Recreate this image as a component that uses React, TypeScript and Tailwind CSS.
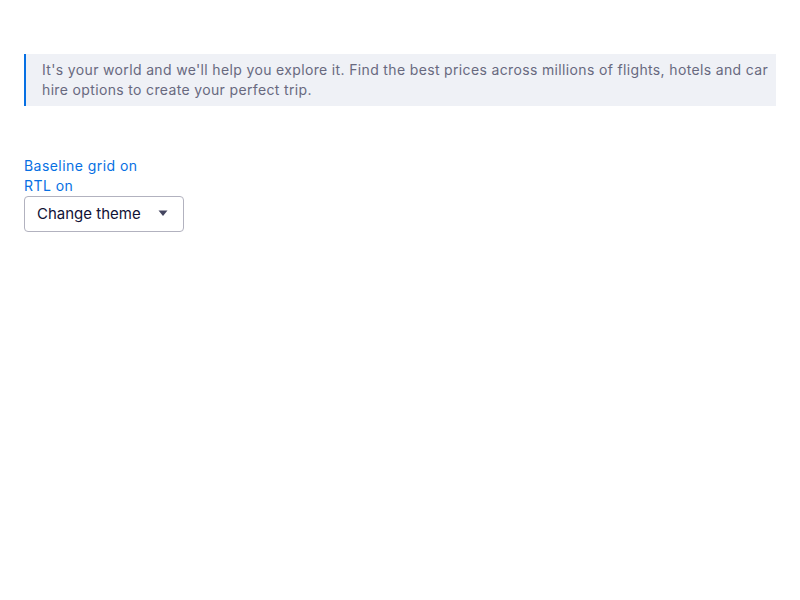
export default function App() {
  return (
    <div className="min-h-[600px] w-full bg-white px-6 pt-[54px] font-['Inter',sans-serif]">
      <blockquote className="border-l-2 border-[#0770e3] bg-[#eff1f6] py-[6px] pl-4 pr-1 text-[14px] leading-5 tracking-[0.35px] text-[#68697f]">
        It's your world and we'll help you explore it. Find the best prices across millions of flights, hotels and car
        hire options to create your perfect trip.
      </blockquote>
      <div className="mt-[50px] flex flex-col items-start text-[14px] leading-5 tracking-[0.45px] text-[#0770e3]">
        <button className="leading-5">Baseline grid on</button>
        <button className="leading-5">RTL on</button>
      </div>
      <div className="relative w-[160px]">
        <select className="h-9 w-full appearance-none rounded border border-[#b2b2bf] bg-white pl-3 pr-8 text-[15px] text-[#111236]">
          <option>Change theme</option>
        </select>
        <svg className="pointer-events-none absolute right-[16px] top-[14px]" width="10" height="7" viewBox="0 0 10 7">
          <path d="M0.5 0.5h9L5 6z" fill="#444560" />
        </svg>
      </div>
    </div>
  );
}
